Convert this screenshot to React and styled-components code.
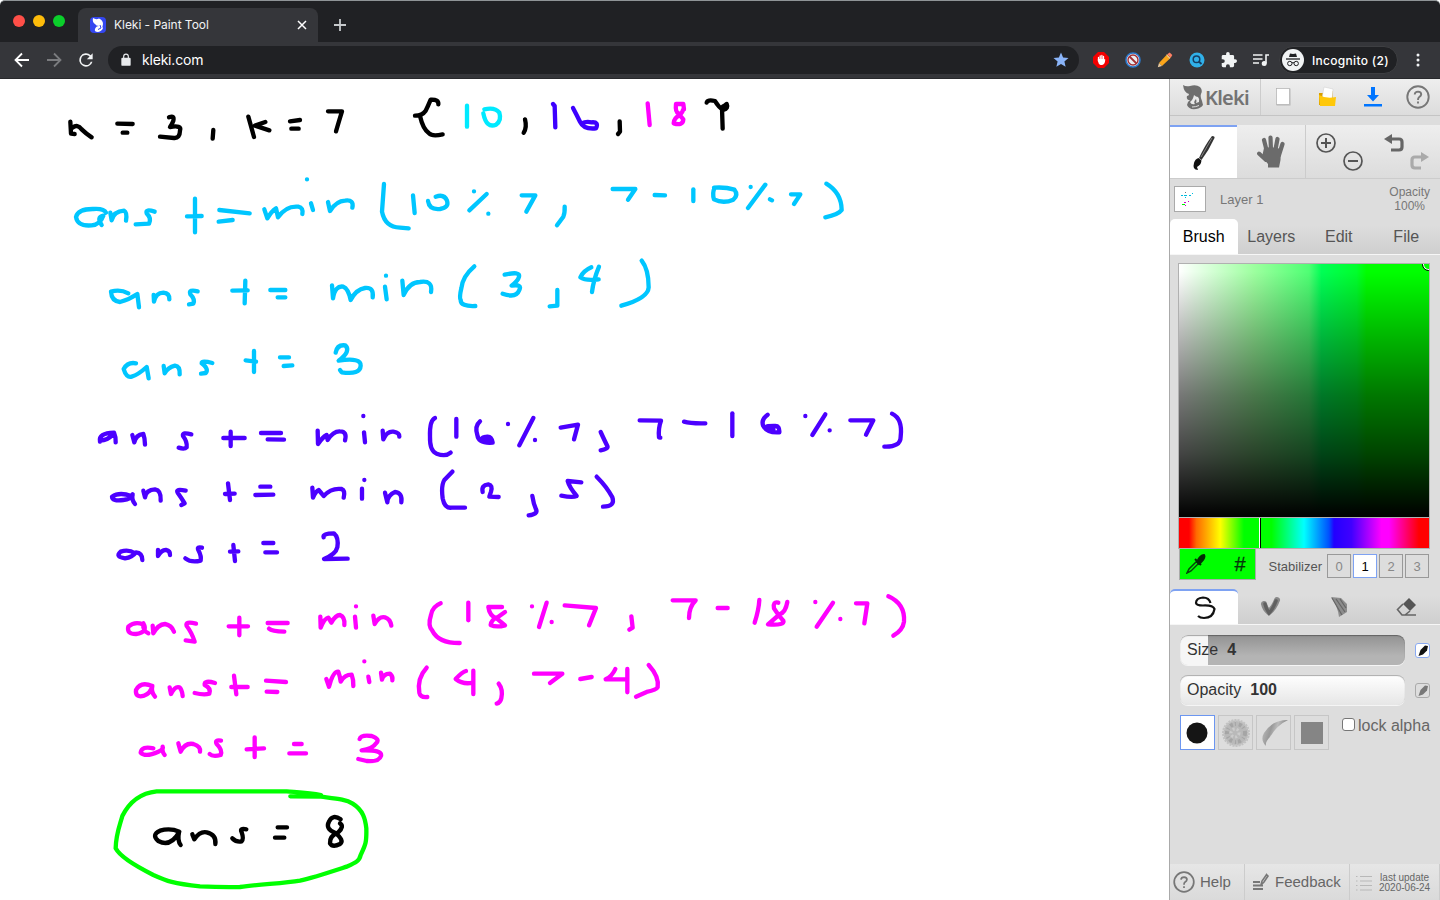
import React from 'react';
import styled, { createGlobalStyle } from 'styled-components';

const GlobalStyle = createGlobalStyle`
  * { box-sizing: border-box; }
  body { margin: 0; background: #fff; font-family: "Liberation Sans", Arial, sans-serif; overflow: hidden; }
  svg { display: block; flex: none; }
`;

/* ---------- browser chrome ---------- */
const Window = styled.div`
  width: 1440px; height: 900px; display: flex; flex-direction: column; overflow: hidden;
`;
const TabStrip = styled.div`
  height: 42px; background: #202124; border-top: 1px solid #8f9497; display: flex; align-items: flex-end;
  font-family: Inter, sans-serif; border-radius: 5px 5px 0 0;
`;
const Lights = styled.div`
  display: flex; gap: 8px; width: 78px; height: 41px; padding: 14px 0 0 13px;
`;
const Light = styled.span`
  width: 12px; height: 12px; border-radius: 50%; background: ${(p) => p.$color};
`;
const Tab = styled.div`
  width: 240px; height: 34px; background: #35363a; border-radius: 8px 8px 0 0; display: flex; align-items: center;
  padding: 0 11px 0 12px; color: #f1f3f4; font-size: 12px; letter-spacing: -0.04px;
`;
const TabTitle = styled.span`
  margin-left: 8px; flex: 1; white-space: nowrap; padding-bottom: 1px;
`;
const NewTab = styled.div`
  width: 44px; height: 34px; display: flex; align-items: center; justify-content: center;
`;
const Toolbar = styled.div`
  height: 37px; background: #35363a; border-bottom: 1px solid #28292c; display: flex; align-items: center;
  padding: 0 13px 0 12px; font-family: Inter, sans-serif; color: #fff;
`;
const NavIcons = styled.div`
  display: flex; gap: 12px; width: 96px; align-items: center;
`;
const AddressBar = styled.div`
  width: 971px; height: 28px; border-radius: 14px; background: #202124; display: flex; align-items: center;
  padding: 0 9px 0 11px; font-size: 14px; letter-spacing: -0.2px;
`;
const Url = styled.span`
  flex: 1; margin-left: 9px; padding-bottom: 1px;
`;
const Extensions = styled.div`
  display: flex; gap: 16px; margin-left: 14px; align-items: center;
`;
const Incognito = styled.div`
  height: 28px; width: 119px; margin-left: 10px; border-radius: 14px; background: #202124; display: flex;
  align-items: center; gap: 8px; padding-left: 2px; font-size: 12px; font-weight: 500; white-space: nowrap;
  letter-spacing: 0.3px; border: 1px solid #3e3f42;
`;
const KebabSlot = styled.div`
  margin-left: 18px;
`;

/* ---------- page ---------- */
const Page = styled.div`
  flex: 1; display: flex; min-height: 0;
`;
const Canvas = styled.main`
  width: 1169px; background: #fff;
`;
const Sidebar = styled.aside`
  width: 271px; background: #ddd; border-left: 1px solid #aaa; color: #666; display: flex; flex-direction: column;
`;
const raised = 'linear-gradient(#eee, #dcdcdc)';
const Header = styled.div`
  height: 37px; display: flex; background: ${raised}; border-bottom: 1px solid #c4c4c4;
`;
const Brand = styled.div`
  width: 91px; padding: 0 0 0 13px; display: flex; align-items: center; gap: 1px; border-right: 1px solid #ccc;
  font: 600 20px "Noto Sans", sans-serif; letter-spacing: -0.75px; color: #737373;
`;
const HeaderButton = styled.div`
  flex: 1; display: flex; align-items: center; justify-content: center;
`;
const ToolRow = styled.div`
  height: 54px; margin-top: 9px; display: flex; background: ${raised}; border-bottom: 1px solid #ccc;
`;
const Tool = styled.div`
  width: ${(p) => p.$width}px; display: flex; align-items: center; justify-content: center;
  border-right: ${(p) => (p.$divided ? '1px solid #ccc' : 'none')};
  border-top: ${(p) => (p.$active ? '2px solid #7ea2f2' : 'none')};
  background: ${(p) => (p.$active ? '#fff' : 'none')};
`;
const LayerRow = styled.div`
  height: 40px; display: flex; align-items: center; padding: 0 10px 0 4px; font-size: 13px; color: #777;
`;
const Thumb = styled.div`
  width: 32px; height: 26px; border: 1px solid #aaa; background: #fff; margin-right: 14px;
`;
const LayerName = styled.span`
  flex: 1;
`;
const LayerOpacity = styled.span`
  font-size: 12px; line-height: 14px; text-align: center;
`;
const TabBar = styled.div`
  height: 36px; display: flex; border-bottom: 1px solid #f6f6f6; font-size: 16px; color: #555;
  background: linear-gradient(#ddd 20%, #cfcfcf);
  margin-top: ${(p) => p.$top || 0}px;
`;
const TabItem = styled.div`
  width: 67.5px; height: 35px; display: flex; align-items: center; justify-content: center;
  color: ${(p) => (p.$active ? '#000' : '#555')};
  background: ${(p) => (p.$active ? '#fff' : 'none')};
  border-radius: ${(p) => (p.$active ? '5px 5px 0 0' : '0')};
  border-top: ${(p) => (p.$accent ? '2px solid #7ea2f2' : 'none')};
`;
const ColorField = styled.div`
  margin: 8px 0 0 8px; width: 252px; height: 255px; border: 1px solid #b0b0b0; position: relative; overflow: hidden;
  background: linear-gradient(to top, #000f, #000b 25%, #0008 48%, #0004 73%, #0000 97%),
    linear-gradient(to right, #fff 0, #9dff9f 30%, #4fff74 52%, #0f5 57%, #00ff2c 71%, #0f0 75%);
`;
const FieldMarker = styled.span`
  position: absolute; right: -6px; top: -6px; width: 13px; height: 13px; border-radius: 50%; border: 1px solid #000;
  box-shadow: inset 0 0 0 1px #fff;
`;
const HueBar = styled.div`
  margin: 0 0 0 8px; width: 252px; height: 31px; border: 1px solid #b0b0b0; border-top: none; position: relative;
  background: linear-gradient(to right, #f00 4%, #ff6a00 7%, #ff0 16.5%, #0f0 26%, #0f0 37%, #0ff 50%, #0050ff 60%, #20f 62%, #4000ff 69%, #f0f 81%, #f0f 84%, #f00 96%);
`;
const HueMarker = styled.span`
  position: absolute; left: 80px; top: 0; width: 2px; height: 30px; background: #000; border-left: 1px solid #fff;
`;
const ColorRow = styled.div`
  height: 31px; display: flex; padding: 0 11px 0 9px; align-items: center;
`;
const Swatch = styled.div`
  width: 77px; height: 31px; background: #0f0; border: 1px solid #aaa; border-top: none; display: flex;
  align-items: center; justify-content: space-between; padding: 0 9px 0 6px; color: #05360a; font-size: 20px;
  -webkit-text-stroke: 0.3px #05360a;
`;
const StabilizerLabel = styled.span`
  margin: 3px 5px 0 13px; font-size: 13px; color: #555; flex: 1; white-space: nowrap;
`;
const Steps = styled.div`
  display: flex; gap: 2px; margin-top: 3px;
`;
const Step = styled.span`
  width: 24px; height: 24px; border: 1px solid ${(p) => (p.$active ? '#7ea2f2' : '#999')};
  background: ${(p) => (p.$active ? '#fff' : 'none')}; color: ${(p) => (p.$active ? '#000' : '#888')};
  display: flex; align-items: center; justify-content: center; font-size: 13px;
`;
const SliderRow = styled.div`
  display: flex; align-items: center; justify-content: space-between; padding: 0 10px; height: 30px;
  margin-top: 10px;
`;
const Slider = styled.div`
  width: 225px; height: 30px; border-radius: 8px; display: flex; align-items: center; gap: 9px; padding-left: 7px;
  font-size: 16px; color: #333; box-shadow: inset 0 1px 1px #0005, 0 1px 0 #f5f5f5;
  background: linear-gradient(to right, #f6f6f6 ${(p) => p.$fill}, transparent ${(p) => p.$fill}),
    linear-gradient(#929292, #b4b4b4 70%);
`;
const FullSlider = styled(Slider)`
  background: linear-gradient(#fff, #e6e6e6);
`;
const Pressure = styled.span`
  width: 15px; height: 15px; border-radius: 3px; border: 1px solid ${(p) => (p.$active ? '#8aaaf2' : '#aaa')};
  background: ${(p) => (p.$active ? '#fff' : 'none')}; display: flex; align-items: center; justify-content: center;
`;
const TipRow = styled.div`
  display: flex; gap: 3px; margin-top: 10px; padding: 0 9px 0 10px;
`;
const Tip = styled.span`
  width: 35px; height: 35px; border: 1px solid ${(p) => (p.$active ? '#6c96f0' : '#c6c6c6')};
  background: ${(p) => (p.$active ? '#fff' : 'none')}; display: flex; align-items: center; justify-content: center;
`;
const LockAlpha = styled.label`
  display: flex; margin-left: 10px; gap: 3px; font-size: 16px; line-height: 21px; white-space: nowrap;
`;
const Check = styled.span`
  width: 13px; height: 13px; margin-top: 3px; background: #fff; border: 1px solid #767676; border-radius: 3px;
`;
const Footer = styled.div`
  margin-top: auto; height: 36px; display: flex; background: linear-gradient(#e6e6e6, #dadada);
`;
const FooterItem = styled.div`
  width: ${(p) => p.$width}px; display: flex; align-items: center; border-right: 1px solid #ccc;
  padding-left: ${(p) => p.$pad}px; gap: ${(p) => p.$gap}px; font-size: ${(p) => (p.$small ? 10 : 15)}px;
  line-height: ${(p) => (p.$small ? '10px' : '20px')}; text-align: center; white-space: nowrap;
  padding-top: ${(p) => (p.$small ? 1 : 0)}px;
`;

/* ---------- pen strokes, in a 3x sketch space offset by x, y ---------- */
const CYAN = '#00c6ff';
const INDIGO = '#4c00ff';
const PINK = '#ff00ff';
const sketches = [
  { x: 50, y: 1, color: '#000', d: [
    'M61 125L63 161L74 162M68 143Q82 135 95 148Q108 160 125 172', 'M202 131L248 132M218 158L232 158',
    'M357 112Q371 108 370 122Q366 132 360 141Q390 138 390 152Q387 172 372 174L330 170', 'M490 150L488 176',
    'M595 110L612 171M646 126L615 137L658 151', 'M720 124L750 120M724 146L746 146', 'M834 94L876 94Q868 120 858 154'] },
  { x: 50, y: 1, color: CYAN, d: [
    'M168 398Q158 387 130 387Q90 390 78 411Q88 435 125 436Q148 430 160 407Q144 414 155 435',
    'M181 398L185 421Q195 397 222 392Q230 400 228 422', 'M314 395Q290 389 290 400Q302 415 297 431L257 433',
    'M435 356L435 457M411 409L455 408', 'M508 390L599 400M506 425L548 420',
    'M643 388L652 415Q665 395 678 385L684 412Q710 382 745 380Q758 385 757 402', 'M783 370L789 390M771 298L771 298.1',
    'M834 366L840 393Q860 367 885 362Q908 362 907 383', 'M1002 312L996 395Q1010 435 1050 443L1076 445',
    'M235 640Q210 630 183 635Q188 660 210 666Q238 657 262 642L267 682', 'M311 645L312 665Q320 642 340 638Q356 642 358 658',
    'M443 634Q420 630 421 643Q433 658 430 671L417 673', 'M586 602L584 670M547 632L593 631', 'M661 630L706 630M683 652L706 652',
    'M846 616L849 655Q858 622 880 620Q894 630 902 660Q920 632 945 624Q968 626 968 652',
    'M1005 620L1010 658M1008 587L1008 587.1', 'M1057 602L1061 645Q1080 612 1110 606Q1143 606 1143 636',
    'M258 850Q235 849 221 867Q230 890 245 890Q265 882 290 861L296 895', 'M341 858L344 880Q355 864 375 857Q388 862 389 883',
    'M487 849Q459 843 455 850Q473 866 467 879L453 881', 'M612 813L612 876M587 841L618 845', 'M690 832L717 832M701 858L727 856',
    'M857 818Q864 797 886 796Q896 815 866 842Q924 837 932 857Q923 880 875 877L870 870'] },
  { x: 400, y: 1, color: '#000', d: [
    'M115 73Q113 60 92 59Q84 78 77 92Q65 105 45 107M60 108Q70 143 87 160Q100 168 128 163', 'M375 118Q379 142 371 158',
    'M659 124L660 155L654 162', 'M920 68Q925 60 945 63Q956 80 970 90Q983 84 980 72L966 84L968 146M968 80L975 76'] },
  { x: 400, y: 1, color: '#00eaff', d: ['M201 77L201 140', 'M253 88Q282 84 298 98Q302 120 288 134Q262 138 250 100'] },
  { x: 400, y: 1, color: '#3d00ff', d: ['M459 72L464 78L466 142', 'M519 84Q530 105 540 125Q555 145 588 145Q593 128 575 127Q558 125 545 130'] },
  { x: 400, y: 1, color: PINK, d: ['M743 70L749 135', 'M852 88L850 72L828 72Q827 93 835 100L850 118Q845 134 821 130Q824 115 840 105Q847 97 850 88'] },
  { x: 400, y: 1, color: CYAN, d: [
    'M39 346L44 399', 'M84 363Q92 386 120 387Q143 380 141 362Q130 345 107 350', 'M222 334L222 334.1M260 342L208 391M265 401L265 401.1',
    'M365 346L406 346L379 395', 'M494 380Q494 398 490 410L471 436', 'M638 327L706 327L684 359', 'M764 345L795 346', 'M880 328L880 363',
    'M944 323Q938 340 942 358Q970 368 1000 359Q1012 345 1003 329Q975 322 942 323', 'M1052 321L1052 321.1M1096 314L1044 384M1110 358L1116 361',
    'M1173 343L1201 343L1182 372', 'M1279 311Q1318 342 1325 390Q1311 403 1276 412',
    'M223 559Q192 590 184 625Q179 650 182 660Q188 677 226 678', 'M314 584Q354 577 357 590Q352 602 335 617Q361 615 358 630Q344 650 308 641',
    'M472 630L472 677L449 679', 'M574 562Q552 574 541 592Q560 601 596 598M597 560Q582 600 576 636', 'M725 542Q743 572 746 622Q733 653 664 677'] },
  { x: 80, y: 321, color: INDIGO, d: [
    'M60 125Q62 103 102 98Q107 112 107 127M60 122Q82 118 98 104', 'M157 105L163 127Q170 107 190 102Q194 115 195 134',
    'M334 103Q310 98 309 108Q320 125 320 142Q312 147 296 143', 'M452 95L452 138M430 114L494 114', 'M543 99L603 99M563 118L612 119',
    'M713 92L714 132Q727 114 740 105L743 120Q760 97 780 94Q798 98 795 121', 'M852 97L855 127M850 48L850 48.1',
    'M908 92L910 118Q922 97 940 95Q956 99 958 110', 'M1065 54Q1051 67 1050 110Q1052 148 1070 161Q1095 168 1112 158', 'M1129 57L1129 110',
    'M154 288Q120 279 96 290Q101 302 130 300Q150 297 158 283Q156 298 165 312', 'M190 272L195 292Q202 272 225 268Q241 275 242 302',
    'M317 272Q291 268 293 278Q305 295 314 310L304 315', 'M444 250L450 300M435 282L464 281', 'M541 260L571 260M526 285L580 284',
    'M697 263L699 293Q708 275 716 270Q722 277 731 288Q755 267 785 267Q794 274 791 293', 'M846 266L846 296M853 240L853 240.1',
    'M915 278L922 307Q926 287 945 276Q964 282 964 307', 'M1117 215L1093 240Q1085 260 1088 295Q1096 321 1115 323L1155 323',
    'M165 460Q145 450 122 455Q111 469 135 475Q155 470 168 457Q184 461 187 480', 'M234 450L234 468Q245 452 258 450Q269 454 270 465',
    'M366 443Q353 441 355 450Q363 468 362 482Q335 486 316 475', 'M460 435L465 483M450 455L475 454', 'M550 429L580 429M556 457L591 457',
    'M731 412Q732 402 762 400Q774 415 772 442Q763 462 732 477L803 476'] },
  { x: 420, y: 321, color: INDIGO, d: [
    'M180 64Q167 80 172 105Q181 127 218 128Q213 111 200 110Q187 112 188 115L205 122', 'M264 72L264 72.1M340 54L298 136M345 120L345 120.1',
    'M422 83L474 74L462 118', 'M542 96Q554 122 562 138Q562 146 542 151', 'M659 61L723 62Q716 85 717 112L721 113', 'M792 65Q815 70 856 70',
    'M937 40L937 108', 'M1043 44Q1026 60 1030 78Q1045 96 1078 97Q1077 80 1065 78Q1045 78 1040 80L1060 88',
    'M1156 48L1156 48.1M1216 43L1177 105M1229 91L1229 91.1', 'M1291 61L1360 61L1338 104', 'M1416 41Q1443 62 1442 110Q1435 137 1393 140',
    'M188 276Q187 258 205 253Q216 258 213 275L208 290L236 291', 'M337 288Q341 310 348 328Q350 341 326 346',
    'M484 247L443 243Q450 262 470 288Q455 292 424 287', 'M530 230Q559 261 577 292Q580 316 549 320'] },
  { x: 100, y: 501, color: PINK, d: [
    'M128 133Q105 127 85 140Q84 159 108 162Q138 154 130 130Q130 150 145 160', 'M158 137L160 160Q175 137 195 132Q213 138 222 155',
    'M288 131Q260 126 260 138Q274 158 284 185L257 181', 'M418 113L418 166M386 139L444 139', 'M503 129L563 129M507 146Q520 153 553 155',
    'M661 110L662 143Q674 118 685 113L694 128Q707 108 720 105Q733 114 733 135', 'M765 110L768 143M768 79L768 79.1',
    'M820 107L824 132Q838 112 855 112Q869 119 874 137', 'M1022 70Q1000 82 993 105Q986 135 997 152Q1022 184 1079 189', 'M1105 68L1105 121',
    'M157 318Q125 309 108 330Q109 349 130 348Q150 338 157 318Q155 335 165 350', 'M209 322L213 342Q225 322 238 322Q245 330 248 348',
    'M345 309Q317 303 314 315Q330 325 328 341Q310 344 284 339', 'M402 287L409 343M394 321L443 321', 'M498 302L558 306M500 335L532 336',
    'M679 297L687 320Q700 280 715 275Q720 290 722 305Q735 287 755 284Q760 300 760 318', 'M805 290L808 306M793 244L793 244.1',
    'M843 278L846 299Q852 284 870 281Q878 290 877 301', 'M980 263Q956 296 958 338Q964 351 982 351',
    'M1098 273Q1085 279 1067 297Q1090 311 1118 308M1120 272L1120 342', 'M1196 311Q1207 330 1204 355Q1200 367 1190 371',
    'M160 505Q130 501 122 518Q140 528 175 515Q189 507 188 500Q187 515 194 525', 'M235 490L242 515Q257 492 280 492Q299 500 300 515',
    'M363 482Q347 481 350 492Q365 510 362 525Q340 529 329 522', 'M464 472L464 531M440 508L492 505', 'M582 492L605 492M568 520L618 520',
    'M779 477Q787 466 815 468Q836 478 828 490Q815 504 785 511Q838 512 843 528Q833 543 800 543L775 537'] },
  { x: 400, y: 501, color: PINK, d: [
    'M306 81L265 81Q271 105 290 115L315 136Q290 141 272 135Q276 120 295 110L315 96', 'M396 79L396 79.1M440 68L417 141M455 126L455 126.1',
    'M494 76L588 84L567 136', 'M694 109L698 143L688 149', 'M818 61L887 61Q870 82 867 114', 'M953 84L983 84', 'M1078 60Q1075 90 1064 128',
    'M1162 66Q1155 93 1140 102L1104 133Q1148 134 1150 122Q1135 105 1122 85Q1121 67 1135 68', 'M1246 66L1246 66.1M1299 68L1250 140M1321 117L1321 117.1',
    'M1368 70L1402 70L1393 130', 'M1465 49Q1508 76 1512 125Q1505 149 1480 167', 'M402 281L487 281L450 309', 'M541 297L575 291',
    'M646 267Q635 287 617 298L682 298M682 267L682 337', 'M746 255Q773 290 773 322Q765 330 740 336L708 350'] },
  { x: 100, y: 501, color: '#00ff00', raw: true, d: [
    'M571 649L663 650C710 656 738 658 758 671C790 691 796 718 799 745C800 790 796 795 782 825C778 844 765 849 740 860C700 873 640 893 600 902C550 911 480 912 420 921C370 922 340 921 300 919C220 911 200 903 160 885C100 855 60 830 47 805C48 760 60 735 67 708C85 672 115 640 170 634L560 634C600 637 630 638 663 645'] },
  { x: 100, y: 501, color: '#000', d: [
    'M238 755Q210 746 180 752Q160 765 175 783Q210 793 237 757Q234 780 242 795', 'M277 763L283 778Q300 757 320 757Q345 767 346 792',
    'M439 748Q422 746 425 757Q430 775 425 784Q410 785 397 775', 'M533 742L561 742M525 773L553 773',
    'M722 718Q700 707 687 725Q681 745 705 758Q728 780 720 792Q700 800 690 790Q692 770 715 757Q729 740 720 730'] },
];

/* Bows each curve outward so the pen passes close to its middle point. */
const bow = (d) => {
  let last = [0, 0];
  return d.replace(/([MLQ])([^MLQ]+)/g, (_, op, args) => {
    const n = args.trim().split(/\s+/).map(Number);
    const end = n.slice(-2);
    let out = `${op}${n.join(' ')}`;
    if (op === 'Q') {
      const c = [0, 1].map((i) => n[i] + 0.4 * (n[i] - (last[i] + end[i]) / 2));
      out = `Q${c.join(' ')} ${end.join(' ')}`;
    }
    last = end;
    return out;
  });
};

const Painting = () => (
  <svg width="1169" height="821" fill="none" strokeLinecap="round" strokeLinejoin="round">
    {sketches.map((s, i) => (
      <g key={i} transform={`translate(${s.x} ${s.y}) scale(.33333)`} stroke={s.color} strokeWidth="13">
        {s.d.map((d) => <path key={d} d={s.raw ? d : bow(d)} />)}
      </g>
    ))}
  </svg>
);

/* ---------- icons ---------- */
const Favicon = () => (
  <svg width="16" height="16" viewBox="0 0 16 16">
    <rect width="16" height="16" rx="4" fill="#3447f0" />
    <path d="M3 1Q6 3 9 1.500Q13 3 13 7Q12 10 13 11Q12 14 8 15Q4 15 5 12Q6 9 9 9Q6 9 5 7Q2 5 3 1Z" fill="#fff" />
    <path d="M10 8L11 11L8 12.500" stroke="#3447f0" fill="none" />
  </svg>
);
const Stroke = ({ size = 16, box = 16, d, color = '#fff', w = 2 }) => (
  <svg width={size} height={size} viewBox={`0 0 ${box} ${box}`} fill="none" stroke={color} strokeWidth={w}><path d={d} /></svg>
);
const Reload = () => (
  <svg width="20" height="20" viewBox="0 0 24 24" fill="#f1f3f4">
    <path d="M17.650 6.350A8 8 0 1 0 19.730 14h-2.080A6 6 0 1 1 12 6c1.660 0 3.140.69 4.220 1.780L13 11h7V4z" />
  </svg>
);
const Lock = () => (
  <svg width="14" height="14" viewBox="0 0 24 24" fill="#e8eaed">
    <path d="M18 8h-1V6A5 5 0 0 0 7 6v2H6a2 2 0 0 0-2 2v10a2 2 0 0 0 2 2h12a2 2 0 0 0 2-2V10a2 2 0 0 0-2-2zM9 8V6a3 3 0 0 1 6 0v2z" />
  </svg>
);
const Star = () => (
  <svg width="18" height="18" viewBox="0 0 24 24" fill="#8ab4f8"><path d="M12 17.270 18.180 21l-1.640-7.030L22 9.240l-7.190-.61L12 2 9.190 8.630 2 9.240l5.460 4.730L5.820 21z" /></svg>
);
const AdBlock = () => (
  <svg width="16" height="16" viewBox="0 0 16 16">
    <path d="M5 0H11L16 5V11L11 16H5L0 11V5Z" fill="#f20000" />
    <path d="M5.500 9V5.500M7.200 8V3.800M8.900 8V3.500M10.500 8V4.500" stroke="#fff" strokeWidth="1.300" strokeLinecap="round" />
    <path d="M4.900 7H11L12.300 7.500Q12 12.500 9 13H7.500Q5.500 12.500 4.900 9Z" fill="#fff" />
  </svg>
);
const Blocker = () => (
  <svg width="16" height="16" viewBox="0 0 16 16" fill="none">
    <circle cx="8" cy="8" r="7" fill="#e9edf2" stroke="#2b79cc" strokeWidth="1.600" />
    <circle cx="8" cy="8" r="5" stroke="#a33035" strokeWidth="1.400" /><path d="M4.500 4.500L11.500 11.500" stroke="#a33035" strokeWidth="1.800" />
  </svg>
);
const PencilEmoji = () => (
  <svg width="16" height="16" viewBox="0 0 16 16">
    <path d="M10.200 2.200L13.800 5.800L5 14L2 11Z" fill="#faa51a" /><path d="M2 11L5 14L.8 15.200Z" fill="#e8caa0" />
    <path d="M10.200 2.200L12.700 .5L15.300 3L13.800 5.800Z" fill="#ff8065" /><path d="M9.600 3L13 6.400" stroke="#d7d7d7" />
  </svg>
);
const SearchBadge = () => (
  <svg width="16" height="16" viewBox="0 0 16 16" fill="none">
    <circle cx="8" cy="8" r="7.500" fill="#30b1ea" /><circle cx="7.500" cy="7.200" r="3.300" stroke="#173e62" strokeWidth="1.500" />
    <path d="M9.800 9.500L12.500 12" stroke="#173e62" strokeWidth="1.800" />
  </svg>
);
const Puzzle = () => (
  <svg width="16" height="16" viewBox="1 1 22 22" fill="#f1f3f4">
    <path d="M20.500 11H19V7a2 2 0 0 0-2-2h-4V3.500a2.500 2.500 0 0 0-5 0V5H4a2 2 0 0 0-2 2v3.800h1.500a2.700 2.700 0 0 1 0 5.400H2V20a2 2 0 0 0 2 2h3.800v-1.500a2.700 2.700 0 0 1 5.400 0V22H17a2 2 0 0 0 2-2v-4h1.500a2.500 2.500 0 0 0 0-5z" />
  </svg>
);
const Playlist = () => (
  <svg width="16" height="16" viewBox="0 0 16 16" stroke="#f1f3f4" strokeWidth="1.600" fill="none">
    <path d="M0 3H9.500M0 7H9.500M0 11H6M16 3H13V11.500" /><circle cx="11.200" cy="11.500" r="1.700" fill="#f1f3f4" />
  </svg>
);
const Spy = () => (
  <svg width="22" height="22" viewBox="0 0 22 22" fill="none">
    <circle cx="11" cy="11" r="11" fill="#f1f3f4" /><path d="M7 8L8 4.500L11 5L14 4.500L15 8Z" fill="#202124" />
    <path d="M4 10H18" stroke="#202124" strokeWidth="1.300" />
    <path d="M10 14Q11 13 12 14" stroke="#202124" /><circle cx="7.800" cy="14.500" r="2.200" stroke="#202124" /><circle cx="14.200" cy="14.500" r="2.200" stroke="#202124" />
  </svg>
);
const Kebab = () => (
  <svg width="4" height="16" viewBox="0 0 4 16" fill="#f1f3f4"><circle cx="2" cy="3" r="1.500" /><circle cx="2" cy="8" r="1.500" /><circle cx="2" cy="13" r="1.500" /></svg>
);
const KlekiMark = () => (
  <svg width="21" height="25" viewBox="0 0 21 25">
    <path d="M0 0Q3 2 7 1Q13 -1 17 2Q20 5 18 9Q17 12 19 16L20 20Q18 23 13 24Q6 25 4 20Q4 17 7 15Q3 15 4 11Q6 11 6 9Q1 8 0 0Z" fill="#6f6f6f" />
    <path d="M11 10Q10 15 7 17Q8 20 12 19Q10 17 13 14Q14 16 13 18L16 17Q17 14 15 12Q13 12 11 10Z" fill="#e9e9e9" />
    <path d="M9 22Q13 22 16 20.500" stroke="#ddd" fill="none" />
  </svg>
);
const NewDoc = () => (
  <svg width="17" height="20" viewBox="0 0 17 20"><rect x="1.500" y="1.500" width="14" height="17" fill="#0003" /><rect x="1.500" y="1.500" width="13" height="16" fill="#fff" stroke="#aaa" strokeWidth=".6" /></svg>
);
const Folder = () => (
  <svg width="20" height="22" viewBox="0 0 20 22">
    <path d="M1 7H5L7 5H15V19H1Z" fill="#daa000" /><path d="M6 1L15 3L14 15L4 12Z" fill="#fff" stroke="#ccc" strokeWidth=".5" />
    <path d="M1 9Q8 13 18 11L17 20H2Z" fill="#ffc80a" />
  </svg>
);
const Download = () => (
  <svg width="18" height="20" viewBox="0 0 18 20" fill="#0075ff"><path d="M7 0H11V8H15L9 14.500L3 8H7ZM0 17H18V19.500H0Z" /></svg>
);
const HelpIcon = ({ size }) => (
  <svg width={size} height={size} viewBox="0 0 24 24" fill="none" stroke="#777" strokeWidth="1.900">
    <circle cx="12" cy="12" r="10.700" /><path d="M8.700 9.500Q9 6.600 12 6.600Q15.300 6.800 15.200 9.500Q15 11 13 12.200Q12 13 12 15M12 16.500V18.500" />
  </svg>
);
const BrushIcon = () => (
  <svg width="24" height="34" viewBox="0 0 24 34">
    <path d="M20 0Q23 0 22.500 2Q17 14 9.500 24L7 22Q13 9 20 0Z" fill="#333" /><path d="M20 2L9 21" stroke="#999" strokeWidth=".8" />
    <path d="M6.500 22L9.500 24.500Q9 29 5 31L6 34Q0 34 2 27Q3 23 6.500 22Z" fill="#111" />
  </svg>
);
const HandIcon = () => (
  <svg width="28" height="33" viewBox="0 0 28 33" fill="none" stroke="#6b6b6b" strokeLinecap="round">
    <path d="M10 17L7 5M14 16L13.500 2.500M18 17L20.500 4M22 20L25.500 9" strokeWidth="4.200" />
    <path d="M9 25L2 18.500" strokeWidth="4" /><path d="M7 13Q15 11 24 14L23.500 25L22 32.500H11V29L5 22Z" fill="#6b6b6b" stroke="none" />
  </svg>
);
const Zooms = () => (
  <svg width="48" height="38" viewBox="0 0 48 38" fill="none" stroke="#555" strokeWidth="1.700">
    <circle cx="10" cy="10" r="9" /><path d="M5 10H15M10 5V15" strokeWidth="2" /><circle cx="37" cy="28" r="9" /><path d="M32 28H42" strokeWidth="2" />
  </svg>
);
const History = () => (
  <svg width="46" height="38" viewBox="0 0 46 38" fill="none" strokeWidth="3.200">
    <path d="M6 6H15Q18 6 18 9V14Q18 17 15 17H7" stroke="#666" /><path d="M8 1V11L0 6Z" fill="#666" />
    <path d="M38 24H31Q28 24 28 27V32Q28 35 31 35H37" stroke="#aaa" /><path d="M37 19V29L45 24Z" fill="#aaa" />
  </svg>
);
const ThumbArt = () => (
  <svg width="30" height="24" strokeWidth="1" fill="none">
    <path d="M6 8.500h2m1 0h3m2 0h2M17 6.500h1M10 10.500h1" stroke="#0bd" /><path d="M10 5.500h1" stroke="#777" /><path d="M9 15.500h2m2-1h1M10 18.500h1" stroke="#c0c" /><path d="M7 17.500h3" stroke="#0e0" />
  </svg>
);
const Dropper = () => (
  <svg width="20" height="20" viewBox="0 0 20 20"><path d="M11 7L3 15L1 19L5 17L13 9" fill="none" stroke="#05460a" strokeWidth="1.500" /><path d="M9 5L15 11M11 8Q14 1 18 1Q20 4 13 10Z" stroke="#022b05" strokeWidth="2" fill="#022b05" /></svg>
);
const PenBrush = () => (
  <Stroke size={24} box={24} color="#111" w={2.200} d="M18.500 7Q17 1.500 11 1.500Q4 2 4 7Q4.500 9.500 11 9.500Q21 9 22.500 13Q21 22 12 22Q8 22 6 20" />
);
const SoftSvg = styled.svg`
  filter: blur(0.7px);
`;
const BlendBrush = () => (
  <SoftSvg width="24" height="24" viewBox="0 0 24 24" fill="none" strokeLinecap="round"><path d="M5 9Q6 14 10 17Q15 13 18 5" stroke="#888" strokeWidth="6" /><path d="M6 9Q7 14 10 18Q14 14 17 6" stroke="#606060" strokeWidth="3.500" /></SoftSvg>
);
const SketchBrush = () => (
  <SoftSvg width="24" height="24" viewBox="0 0 24 24" fill="none"><path d="M4 2L14 3L20 9V17L12 22Q11 12 4 2Z" fill="#8d8d8d" /><path d="M5 3L15 20M9 4L18 17M13 4L19 13" stroke="#666" strokeWidth="1.200" /></SoftSvg>
);
const Eraser = () => (
  <svg width="24" height="24" viewBox="0 0 24 24"><path d="M15 3L22 10L16 16L9 9Z" fill="#555" /><path d="M9 9L3.500 14.500L8 20H11L16 16M8 20H22" fill="none" stroke="#666" strokeWidth="1.600" /></svg>
);
const PressurePen = ({ color }) => (
  <svg width="13" height="13" viewBox="0 0 13 13" fill={color}><path d="M2.500 12L4.500 6L9 1.500L12 2L11 6.500L7 10.500Z" /></svg>
);
const Chalk = () => (
  <SoftSvg width="30" height="30" viewBox="0 0 30 30" fill="none"><circle cx="15" cy="15" r="12.500" fill="#b9b9b9" stroke="#c2c2c2" strokeDasharray="2 1" strokeWidth="3" /><circle cx="15" cy="15" r="9" stroke="#a5a5a5" strokeDasharray="3 2 1 3" strokeWidth="4" /><circle cx="14" cy="15" r="4" stroke="#ccc" strokeDasharray="2 2" strokeWidth="3" /></SoftSvg>
);
const Calligraphy = () => (
  <svg width="30" height="30" viewBox="0 0 30 30"><defs><linearGradient id="cal" x2="1" y2=".3"><stop stopColor="#c4c4c4" /><stop offset=".4" stopColor="#999" /><stop offset=".6" stopColor="#bbb" /><stop offset="1" stopColor="#777" /></linearGradient></defs><path d="M29 2Q13 2 5 15Q1 22 7 28Q6 24 11 19Q18 7 29 2Z" fill="url(#cal)" /></svg>
);
const FeedbackIcon = () => (
  <svg width="18" height="18" viewBox="0 0 18 18" stroke="#777" fill="none" strokeWidth="2"><path d="M1 9H8M1 12.500H11M1 16H11" /><path d="M9 12L10 8L15 1M9 12L12 9L16 3L14 1" strokeWidth="1.600" /></svg>
);
const ListIcon = () => (
  <Stroke color="#b8b8b8" w={1.200} d="M0 1.500H1.500M4 1.500H16M0 6H1.500M4 6H16M0 10.500H1.500M4 10.500H16M0 15H1.500M4 15H16" />
);

export default function App() {
  return (
    <>
      <GlobalStyle />
      <Window>
        <TabStrip>
          <Lights><Light $color="#ff4f48" /><Light $color="#febc0a" /><Light $color="#0bcf2b" /></Lights>
          <Tab><Favicon /><TabTitle>Kleki - Paint Tool</TabTitle><Stroke size={10} box={10} w={1.500} d="M1 1L9 9M9 1L1 9" /></Tab>
          <NewTab><Stroke size={12} box={12} color="#c6c9cc" w={1.800} d="M6 0V12M0 6H12" /></NewTab>
        </TabStrip>
        <Toolbar>
          <NavIcons>
            <Stroke size={20} box={20} d="M17 10H4M10 3.500L3.500 10L10 16.500" w={1.800} />
            <Stroke size={20} box={20} color="#7b7c7f" d="M3 10H16M10 3.500L16.500 10L10 16.500" w={1.800} />
            <Reload />
          </NavIcons>
          <AddressBar><Lock /><Url>kleki.com</Url><Star /></AddressBar>
          <Extensions><AdBlock /><Blocker /><PencilEmoji /><SearchBadge /><Puzzle /><Playlist /></Extensions>
          <Incognito><Spy />Incognito (2)</Incognito>
          <KebabSlot><Kebab /></KebabSlot>
        </Toolbar>
        <Page>
          <Canvas><Painting /></Canvas>
          <Sidebar>
            <Header>
              <Brand><KlekiMark />Kleki</Brand>
              <HeaderButton><NewDoc /></HeaderButton>
              <HeaderButton><Folder /></HeaderButton>
              <HeaderButton><Download /></HeaderButton>
              <HeaderButton><HelpIcon size={24} /></HeaderButton>
            </Header>
            <ToolRow>
              <Tool $width={67} $active><BrushIcon /></Tool>
              <Tool $width={69} $divided><HandIcon /></Tool>
              <Tool $width={67}><Zooms /></Tool>
              <Tool $width={67}><History /></Tool>
            </ToolRow>
            <LayerRow><Thumb><ThumbArt /></Thumb><LayerName>Layer 1</LayerName><LayerOpacity>Opacity<br />100%</LayerOpacity></LayerRow>
            <TabBar>
              <TabItem $active>Brush</TabItem><TabItem>Layers</TabItem><TabItem>Edit</TabItem><TabItem>File</TabItem>
            </TabBar>
            <ColorField><FieldMarker /></ColorField>
            <HueBar><HueMarker /></HueBar>
            <ColorRow>
              <Swatch><Dropper />#</Swatch>
              <StabilizerLabel>Stabilizer</StabilizerLabel>
              <Steps><Step>0</Step><Step $active>1</Step><Step>2</Step><Step>3</Step></Steps>
            </ColorRow>
            <TabBar $top={9}>
              <TabItem $active $accent><PenBrush /></TabItem><TabItem><BlendBrush /></TabItem><TabItem><SketchBrush /></TabItem><TabItem><Eraser /></TabItem>
            </TabBar>
            <SliderRow><Slider $fill="28px"><span>Size</span><b>4</b></Slider><Pressure $active><PressurePen color="#111" /></Pressure></SliderRow>
            <SliderRow><FullSlider><span>Opacity</span><b>100</b></FullSlider><Pressure><PressurePen color="#777" /></Pressure></SliderRow>
            <TipRow>
              <Tip $active><svg width="23" height="22"><circle cx="11" cy="11" r="10.500" fill="#151515" /></svg></Tip>
              <Tip><Chalk /></Tip><Tip><Calligraphy /></Tip>
              <Tip><svg width="22" height="22"><rect width="22" height="22" fill="#858585" /></svg></Tip>
              <LockAlpha><Check />lock alpha</LockAlpha>
            </TipRow>
            <Footer>
              <FooterItem $width={75} $pad={3} $gap={5}><HelpIcon size={22} />Help</FooterItem>
              <FooterItem $width={105} $pad={7} $gap={5}><FeedbackIcon />Feedback</FooterItem>
              <FooterItem $width={90} $pad={6} $gap={7} $small><ListIcon /><span>last update<br />2020-06-24</span></FooterItem>
            </Footer>
          </Sidebar>
        </Page>
      </Window>
    </>
  );
}
